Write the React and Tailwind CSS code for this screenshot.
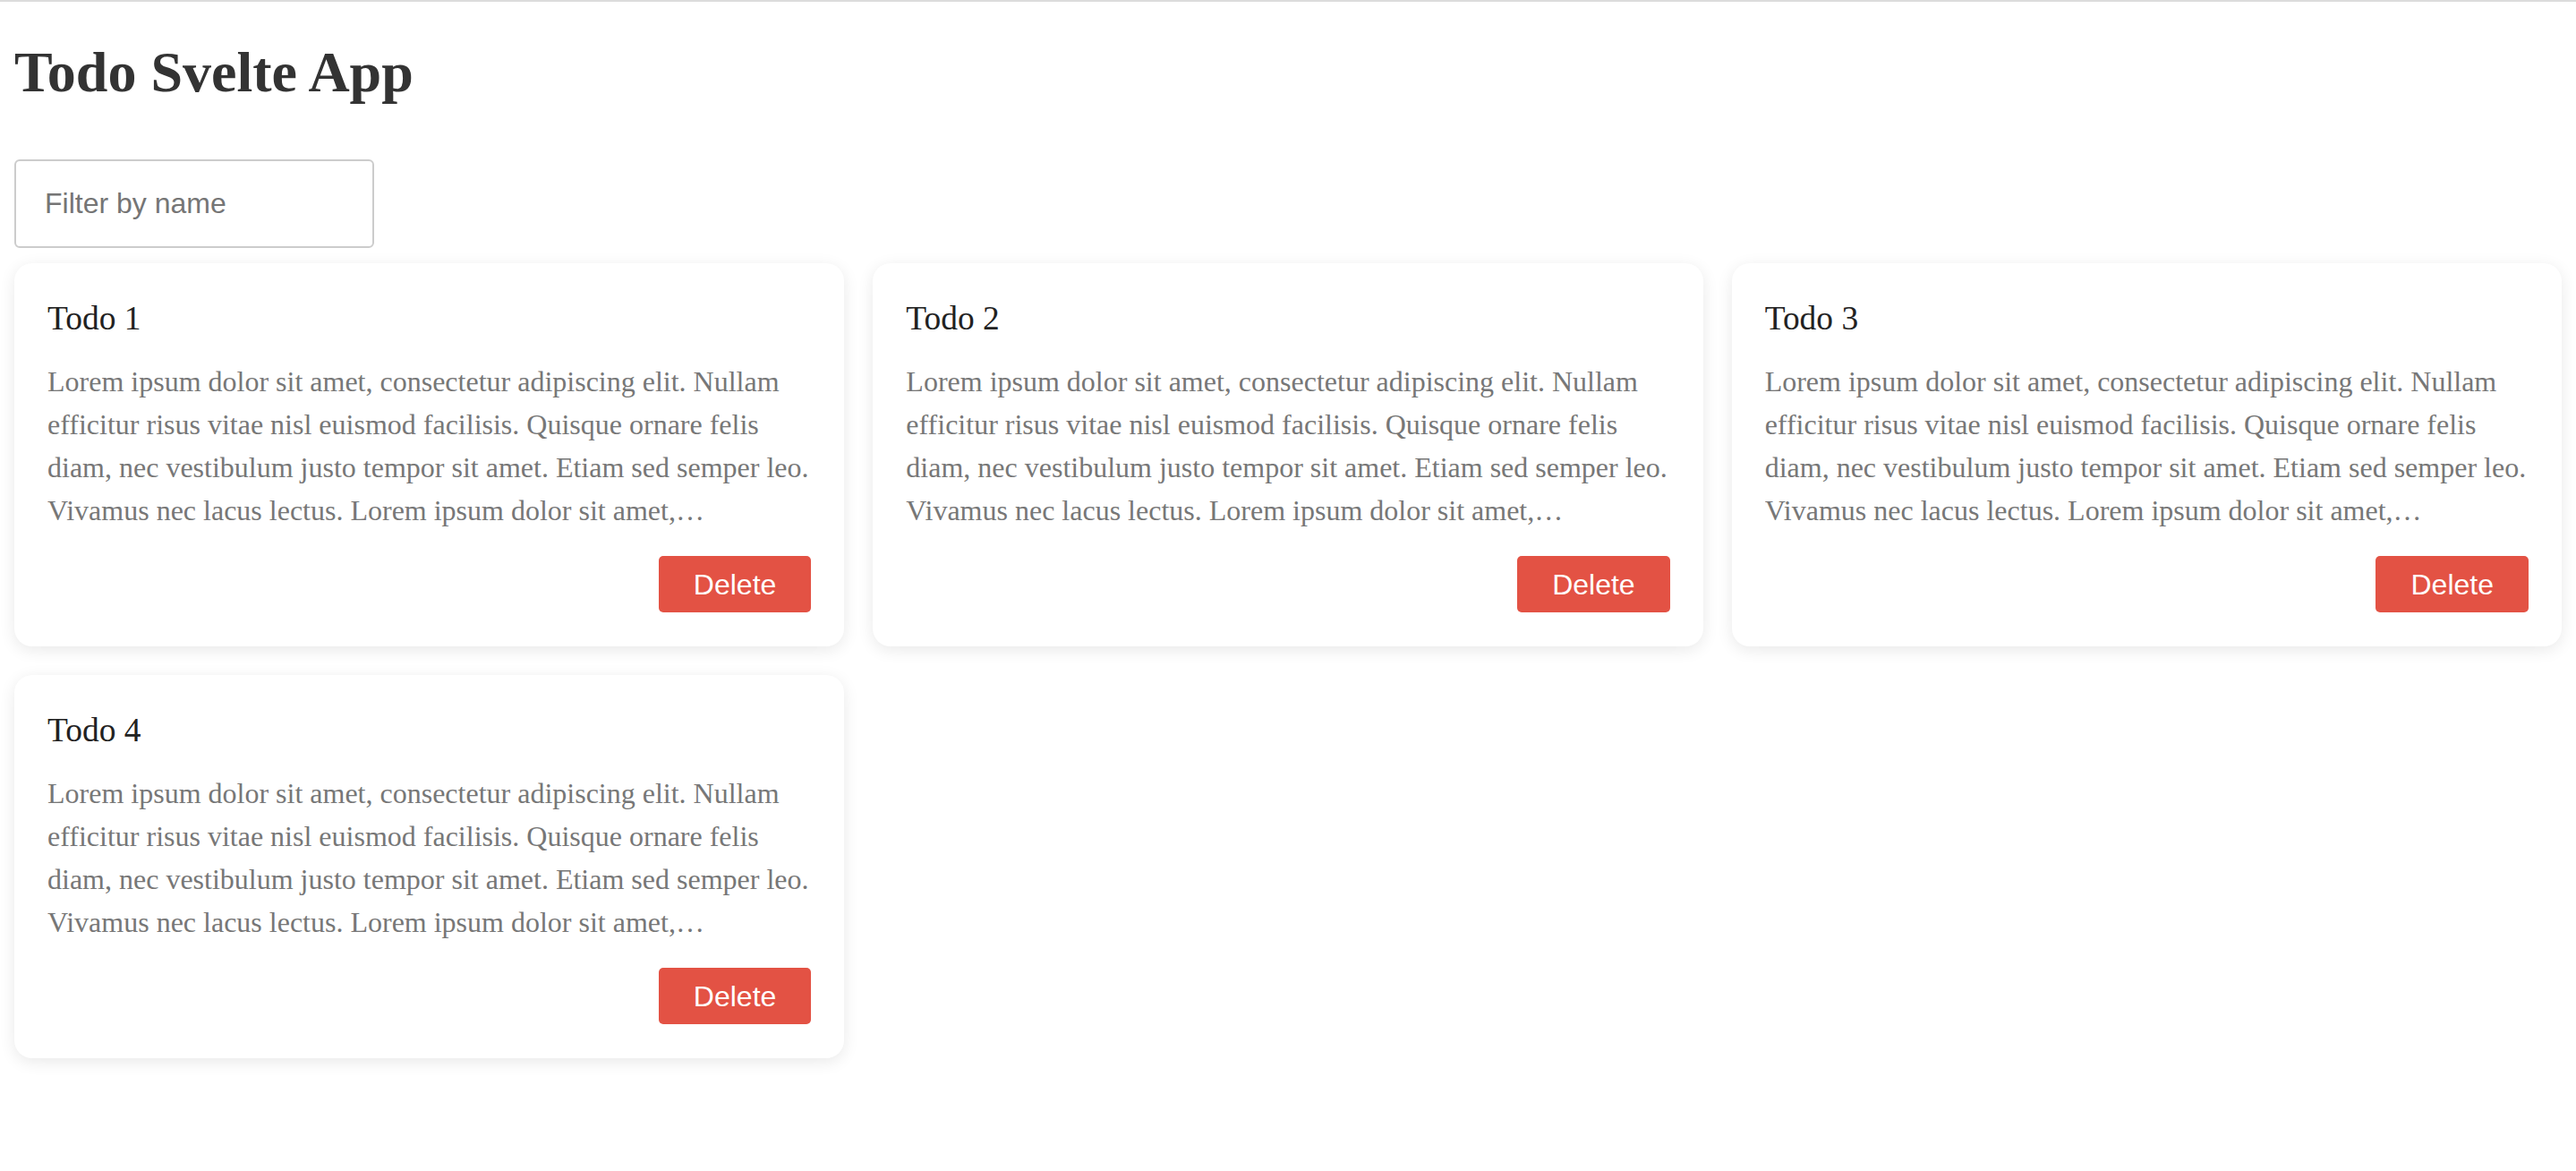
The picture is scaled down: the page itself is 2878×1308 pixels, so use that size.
import { useState } from 'react';

const LOREM =
  'Lorem ipsum dolor sit amet, consectetur adipiscing elit. Nullam efficitur risus vitae nisl euismod facilisis. Quisque ornare felis diam, nec vestibulum justo tempor sit amet. Etiam sed semper leo. Vivamus nec lacus lectus. Lorem ipsum dolor sit amet, consectetur adipiscing elit. Nullam efficitur risus vitae nisl euismod facilisis.';

const initialTodos = [
  { id: 1, name: 'Todo 1', description: LOREM },
  { id: 2, name: 'Todo 2', description: LOREM },
  { id: 3, name: 'Todo 3', description: LOREM },
  { id: 4, name: 'Todo 4', description: LOREM },
];

const TodoCard = ({ todo, onDelete }) => (
  <div className="flex flex-col rounded-[20px] bg-white px-[37px] pt-[40px] pb-[38px] shadow-[0_4px_18px_rgba(0,0,0,0.09)]">
    <h3 className="m-0 font-['Liberation_Serif',serif] text-[37.44px] leading-[43px] font-normal text-[#222]">
      {todo.name}
    </h3>
    <p className="mt-[25px] line-clamp-4 font-['Liberation_Serif',serif] text-[32px] leading-[48px] text-[#777]">
      {todo.description}
    </p>
    <div className="mt-[27px] flex justify-end">
      <button
        className="h-[63px] rounded-[5px] bg-[#e35244] px-[39px] font-['Liberation_Sans',Arial,sans-serif] text-[32px] text-white"
        onClick={() => onDelete(todo.id)}
      >
        Delete
      </button>
    </div>
  </div>
);

const App = () => {
  const [todos, setTodos] = useState(initialTodos);
  const [filter, setFilter] = useState('');

  const visible = todos.filter(t => t.name.toLowerCase().includes(filter.toLowerCase()));

  return (
    <div className="min-h-screen border-t-2 border-[#dcdcdc] bg-white px-4 pb-8">
      <h1 className="mt-[42px] font-['Liberation_Serif',serif] text-[64px] leading-[74px] font-bold text-[#333]">
        Todo Svelte App
      </h1>

      <input
        type="text"
        placeholder="Filter by name"
        value={filter}
        onChange={e => setFilter(e.target.value)}
        className="mt-[60px] block h-[99px] w-[402px] rounded-[6px] border-2 border-[#cccccc] px-[32px] font-['Liberation_Sans',Arial,sans-serif] text-[32px] text-[#333] placeholder:text-[#757575] outline-none"
      />

      <div className="mt-[17px] grid grid-cols-3 gap-[32px]">
        {visible.map(todo => (
          <TodoCard key={todo.id} todo={todo} onDelete={id => setTodos(todos.filter(t => t.id !== id))} />
        ))}
      </div>
    </div>
  );
};

export default App;
